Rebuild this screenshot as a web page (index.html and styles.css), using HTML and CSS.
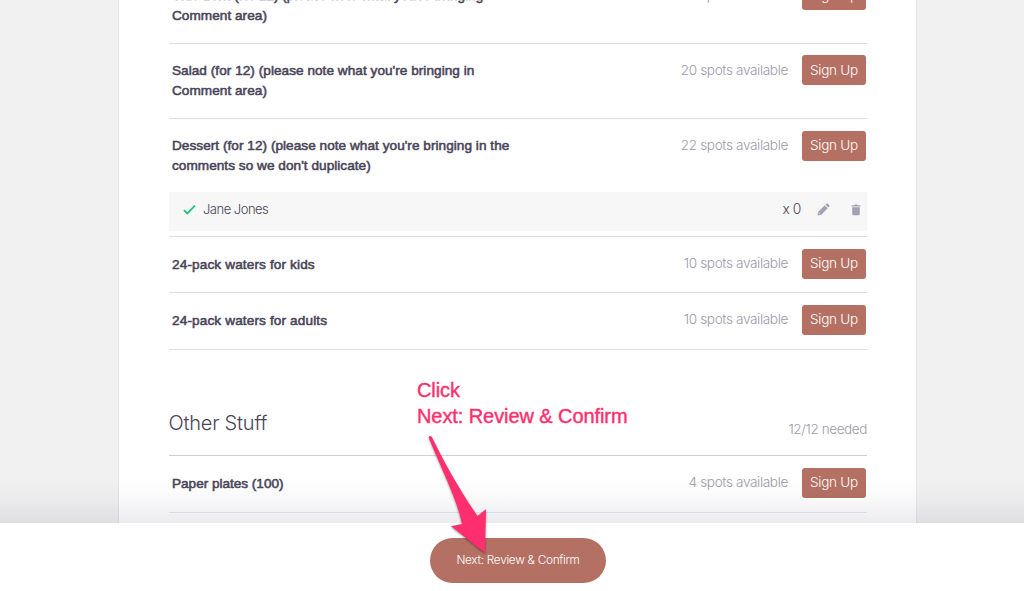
FILE: index.html
```html
<!DOCTYPE html>
<html lang="en">
<head>
<meta charset="utf-8">
<title>Sign Up</title>
<link rel="stylesheet" href="styles.css">
</head>
<body>
<div class="screen">
  <main class="viewport">
    <div class="panel">
      <section class="item item-tall">
        <h3 class="title"><span>Side Dish (for 12) (please note what you're bringing</span><br><span>Comment area)</span></h3>
        <span class="spots">19 spots available</span><button class="signup"><span>Sign Up</span></button>
      </section>
      <section class="item item-tall">
        <h3 class="title"><span>Salad (for 12) (please note what you're bringing in</span><br><span>Comment area)</span></h3>
        <span class="spots">20 spots available</span><button class="signup"><span>Sign Up</span></button>
      </section>
      <section class="item item-open">
        <h3 class="title"><span>Dessert (for 12) (please note what you're bringing in the</span><br><span>comments so we don't duplicate)</span></h3>
        <span class="spots">22 spots available</span><button class="signup"><span>Sign Up</span></button>
        <div class="person">
          <svg class="check" width="13" height="11" viewBox="0 0 13 11"><path d="M.9 6.1 4.3 9.4 12 1.6" fill="none" stroke="#22c480" stroke-width="1.8"/></svg>
          <span class="name">Jane Jones</span>
          <span class="qty">x 0</span>
          <svg class="pencil" width="13" height="13" viewBox="0 0 13 13" fill="#a5a1b4"><path d="M.5 12.5 1.1 8.9 7.700 2.300l3 3-6.600 6.600zM8.400 1.600l.9-.9q.7-.7 1.400 0l1.600 1.600q.7.7 0 1.400l-.9.9z"/><path d="M1.500 9.700 3.300 11.500" stroke="#f7f7f7" stroke-width=".7"/></svg>
          <svg class="trash" width="10" height="12" viewBox="0 0 10 12" fill="#a5a1b4"><path d="M.6 1.200h2.500l.6-.7h2.600l.6.7h2.500v1.300H.6zM1.200 3.200h7.600v6.900q0 1.200-1.200 1.200H2.400q-1.200 0-1.200-1.200z"/></svg>
        </div>
      </section>
      <section class="item">
        <h3 class="title">24-pack waters for kids</h3>
        <span class="spots">10 spots available</span><button class="signup"><span>Sign Up</span></button>
      </section>
      <section class="item item-last">
        <h3 class="title">24-pack waters for adults</h3>
        <span class="spots">10 spots available</span><button class="signup"><span>Sign Up</span></button>
      </section>
      <header class="group">
        <h2 class="group-name">Other Stuff</h2>
        <span class="needed">12/12 needed</span>
      </header>
      <section class="item item-plates">
        <h3 class="title">Paper plates (100)</h3>
        <span class="spots">4 spots available</span><button class="signup"><span>Sign Up</span></button>
      </section>
    </div>
    <div class="shade"></div>
  </main>
  <footer class="bar"><button class="next"><span>Next: Review &amp; Confirm</span></button></footer>
  <p class="note">Click<br>Next: Review &amp; Confirm</p>
  <svg class="arrow" width="72" height="130" viewBox="0 0 72 130"><path d="M8.600 7.300Q10 4.600 12 7.300C23 28 38 54 57.500 77L66 69.600V79.300L65 123 31 96.300 42 94C38 69 20 36 8.600 7.300Z" fill="#ff2e6e" class="arrow-shape"/></svg>
</div>
</body>
</html>
```
FILE: styles.css
```css
* { box-sizing: border-box; }
body { margin: 0; background: #f1f1f1; font-family: Inter, "Liberation Sans", sans-serif; font-weight: 300; color: #494458; }
h2, h3, p { margin: 0; }
button { border: 0; padding: 0; font: inherit; color: #fff; background: #b47063; }
.screen { position: relative; width: 1024px; height: 591px; overflow: hidden; display: flex; flex-direction: column; }
.viewport { position: relative; flex: 0 0 523px; overflow: hidden; }
.panel { width: 799px; height: 555px; margin: -31px 0 0 118px; padding: 0 49px 0 50px; background: #fff; border: solid #e4e4e9; border-width: 0 1px; }
.item { display: grid; grid-template-columns: minmax(0, 1fr) auto 64px; column-gap: 14px; align-items: start; align-content: start; height: 56px; padding: 11px 1px 0 3px; border-bottom: 1px solid #dedee3; }
.item-tall { height: 75px; }
.item-open { height: 118px; }
.item-last { height: 57px; }
.item-plates { height: 57px; border-bottom-color: #e6e6ea; }
.item:not(.item-tall) { padding-top: 11.5px; }
.title { padding-top: 5.5px; font: 13.600px/20px "Liberation Sans", sans-serif; letter-spacing: .04px; -webkit-text-stroke: .55px #494458; white-space: nowrap; }
.item:not(.item-tall):not(.item-open) .title { padding-top: 6px; letter-spacing: .13px; }
.item.item-plates .title { letter-spacing: -.02px !important; }
.spots { padding-top: 4.500px; font-size: 13.600px; line-height: 20px; letter-spacing: -.36px; color: #9e99ab; white-space: nowrap; }
.signup { height: 30px; border-radius: 3px; font-size: 13.600px; letter-spacing: -.3px; line-height: 29px; }
.person { grid-column: 1 / -1; display: flex; align-items: center; width: 698px; height: 39px; margin: 16px 0 0 -3px; padding: 0 6px 4px 14px; background: #f7f7f7; font-size: 13px; line-height: 18px; letter-spacing: -.5px; }
.name { margin: -1px 0 0 7px; }
.qty { margin: -1px 16px 0 auto; font-size: 13.800px; letter-spacing: -.4px; }
.trash { margin-left: 21px; }
.group { display: flex; justify-content: space-between; height: 106px; padding-top: 60px; border-bottom: 1px solid #cfced5; }
.group-name { font-size: 20px; line-height: 26px; font-weight: 300; letter-spacing: -.2px; margin-left: -.5px; }
.needed { padding-top: 9px; font-size: 13.500px; line-height: 20px; letter-spacing: -.4px; color: #9e99ab; }
.shade { position: absolute; inset: auto 0 0; height: 46px; background: linear-gradient(rgba(70,65,90,0), rgba(70,65,90,.035) 50%, rgba(70,65,90,.1)); }
.bar { flex: 1; padding-top: 15px; background: #fff; }
.next { display: block; width: 176px; height: 45px; margin-left: 430px; padding-bottom: 2px; border-radius: 23px; font-size: 11.800px; letter-spacing: -.29px; }
.note { position: absolute; left: 417px; top: 377px; font: 20px/26px "Liberation Sans", sans-serif; letter-spacing: -.08px; color: #ff2e6e; -webkit-text-stroke: .4px #ff2e6e; white-space: nowrap; }
.arrow { position: absolute; left: 420px; top: 430px; filter: drop-shadow(0 1px 1px rgba(0,0,0,.4)); }
.arrow-shape { d: path("M8.6 7.3Q10 4.6 12 7.3C22 28 38 58 57.500 86L66 79.300 65 123 31 96.300 42 94C37 69 20 36 8.600 7.300Z"); }
```
